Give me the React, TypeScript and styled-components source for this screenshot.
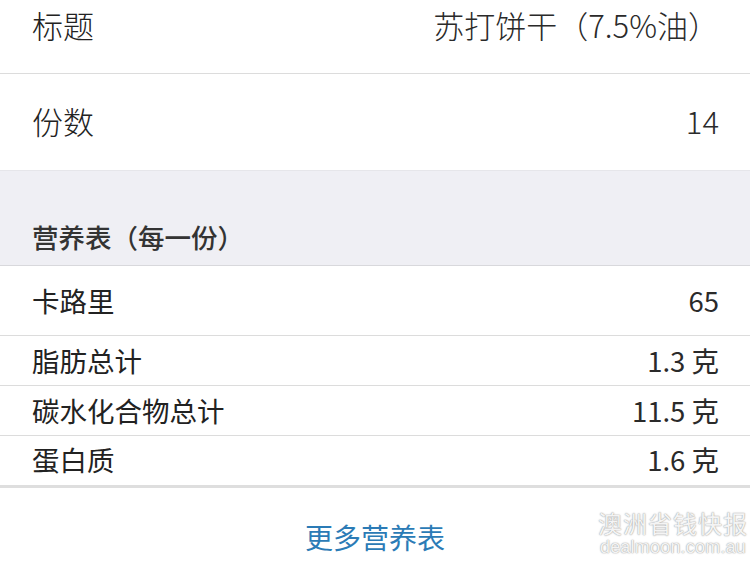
import React from "react";
import styled, { createGlobalStyle } from "styled-components";

const GlobalStyle = createGlobalStyle`
  html, body {
    margin: 0;
    padding: 0;
    background: #ffffff;
    font-family: "Noto Sans CJK SC", "Noto Sans", sans-serif;
  }
`;

const Page = styled.div`
  width: 750px;
  height: 562px;
  overflow: hidden;
  background: #ffffff;
  position: relative;
`;

type RowProps = {
  $height: number;
  $padBottom?: number;
  $size: number;
  $light?: boolean;
  $line?: string;
};

const Row = styled.div<RowProps>`
  box-sizing: border-box;
  height: ${(p) => p.$height}px;
  padding: 0 31px ${(p) => p.$padBottom ?? 0}px 32px;
  display: flex;
  align-items: center;
  justify-content: space-between;
  font-size: ${(p) => p.$size}px;
  font-weight: ${(p) => (p.$light ? 300 : 400)};
  color: #222;
  border-bottom: ${(p) => p.$line ?? "1px solid #dcdcdc"};
`;

const Value = styled.span`
  color: #2a2a2a;
`;

const Section = styled.div`
  box-sizing: border-box;
  height: 96px;
  background: #efeff4;
  border-top: 1px solid #e6e6ea;
  border-bottom: 1px solid #d8d8dc;
  display: flex;
  align-items: flex-end;
  padding: 0 32px 9px;
  font-size: 26.5px;
  font-weight: 500;
  color: #333;
`;

const Footer = styled.div`
  height: 74px;
  box-sizing: border-box;
  padding-top: 24px;
  display: flex;
  justify-content: center;
`;

const MoreLink = styled.a`
  height: 50px;
  display: flex;
  align-items: center;
  font-size: 28px;
  color: #2b7bb6;
  text-decoration: none;
`;

const Watermark = styled.div`
  position: absolute;
  right: 2px;
  bottom: 5px;
  display: flex;
  flex-direction: column;
  align-items: center;
  color: #f4f4f4;
  text-shadow: 0 0 1px #9a9a9a, 0 0 2px #bbbbbb;
`;

const WmTitle = styled.span`
  display: block;
  height: 28px;
  line-height: 28px;
  font-size: 24px;
  letter-spacing: 1px;
`;

const WmSub = styled.span`
  display: block;
  height: 20px;
  line-height: 20px;
  font-family: "Liberation Sans", sans-serif;
  font-size: 18px;
  letter-spacing: 0.2px;
`;

const nutrition = [
  { name: "脂肪总计", value: "1.3 克" },
  { name: "碳水化合物总计", value: "11.5 克" },
  { name: "蛋白质", value: "1.6 克", last: true },
];

function App() {
  return (
    <Page>
      <GlobalStyle />
      <Row $height={74} $padBottom={24} $size={31} $light>
        <span>标题</span>
        <Value>苏打饼干（7.5%油）</Value>
      </Row>
      <Row $height={96} $padBottom={4} $size={31} $light $line="none">
        <span>份数</span>
        <Value>14</Value>
      </Row>
      <Section>营养表（每一份）</Section>
      <Row $height={70} $padBottom={2} $size={27.5}>
        <span>卡路里</span>
        <Value>65</Value>
      </Row>
      {nutrition.map((n) => (
        <Row
          key={n.name}
          $height={n.last ? 52 : 50}
          $padBottom={n.last ? 4 : 2}
          $size={27.5}
          $line={n.last ? "3px solid #dedede" : undefined}
        >
          <span>{n.name}</span>
          <Value>{n.value}</Value>
        </Row>
      ))}
      <Footer>
        <MoreLink href="#">更多营养表</MoreLink>
      </Footer>
      <Watermark>
        <WmTitle>澳洲省钱快报</WmTitle>
        <WmSub>dealmoon.com.au</WmSub>
      </Watermark>
    </Page>
  );
}

export default App;
